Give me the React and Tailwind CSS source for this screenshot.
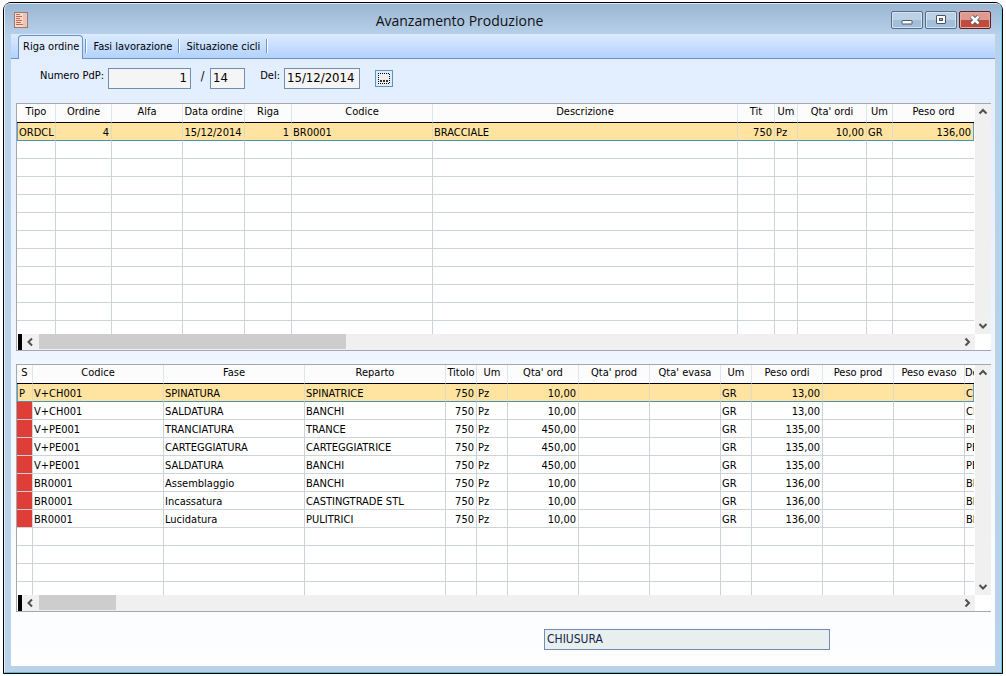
import React, { useState } from 'react';
import clsx from 'clsx';

const ORDER_COLUMNS = [
  { label: 'Tipo', width: 'w-[39px]' },
  { label: 'Ordine', width: 'w-[56px]', align: 'right' },
  { label: 'Alfa', width: 'w-[71px]' },
  { label: 'Data ordine', width: 'w-[62px]', align: 'center' },
  { label: 'Riga', width: 'w-[47px]', align: 'right' },
  { label: 'Codice', width: 'w-[141px]' },
  { label: 'Descrizione', width: 'w-auto' },
  { label: 'Tit', width: 'w-[37px]', align: 'right' },
  { label: 'Um', width: 'w-[23px]' },
  { label: "Qta' ordi", width: 'w-[69px]', align: 'right' },
  { label: 'Um', width: 'w-[26px]' },
  { label: 'Peso ord', width: 'w-[81px]', align: 'right' },
];

const ORDER_ROWS = [
  ['ORDCL', '4', '', '15/12/2014', '1', 'BR0001', 'BRACCIALE', '750', 'Pz', '10,00', 'GR', '136,00'],
];

const PHASE_COLUMNS = [
  { label: 'S', width: 'w-[16px]' },
  { label: 'Codice', width: 'w-[131px]' },
  { label: 'Fase', width: 'w-[141px]' },
  { label: 'Reparto', width: 'w-[141px]' },
  { label: 'Titolo', width: 'w-[31px]', align: 'right' },
  { label: 'Um', width: 'w-[31px]' },
  { label: "Qta' ord", width: 'w-[71px]', align: 'right' },
  { label: "Qta' prod", width: 'w-[71px]', align: 'right' },
  { label: "Qta' evasa", width: 'w-[71px]', align: 'right' },
  { label: 'Um', width: 'w-[31px]' },
  { label: 'Peso ordi', width: 'w-[71px]', align: 'right' },
  { label: 'Peso prod', width: 'w-[71px]', align: 'right' },
  { label: 'Peso evaso', width: 'w-[71px]', align: 'right' },
  { label: 'De', width: 'w-auto', headAlign: 'left' },
];

const PHASE_ROWS = [
  ['P', 'V+CH001', 'SPINATURA', 'SPINATRICE', '750', 'Pz', '10,00', '', '', 'GR', '13,00', '', '', 'CH'],
  ['', 'V+CH001', 'SALDATURA', 'BANCHI', '750', 'Pz', '10,00', '', '', 'GR', '13,00', '', '', 'CH'],
  ['', 'V+PE001', 'TRANCIATURA', 'TRANCE', '750', 'Pz', '450,00', '', '', 'GR', '135,00', '', '', 'PE'],
  ['', 'V+PE001', 'CARTEGGIATURA', 'CARTEGGIATRICE', '750', 'Pz', '450,00', '', '', 'GR', '135,00', '', '', 'PE'],
  ['', 'V+PE001', 'SALDATURA', 'BANCHI', '750', 'Pz', '450,00', '', '', 'GR', '135,00', '', '', 'PE'],
  ['', 'BR0001', 'Assemblaggio', 'BANCHI', '750', 'Pz', '10,00', '', '', 'GR', '136,00', '', '', 'BR'],
  ['', 'BR0001', 'Incassatura', 'CASTINGTRADE STL', '750', 'Pz', '10,00', '', '', 'GR', '136,00', '', '', 'BR'],
  ['', 'BR0001', 'Lucidatura', 'PULITRICI', '750', 'Pz', '10,00', '', '', 'GR', '136,00', '', '', 'BR'],
];

const VISIBLE_ROWS = 12;
const TABS = ['Riga ordine', 'Fasi lavorazione', 'Situazione cicli'];

const ALIGN = { left: 'text-left', center: 'text-center', right: 'text-right' };

const CHEVRONS = {
  up: 'M1.5 6.5 L5 3 L8.5 6.5',
  down: 'M1.5 3 L5 6.5 L8.5 3',
  left: 'M7 1.5 L3.5 5 L7 8.5',
  right: 'M3.5 1.5 L7 5 L3.5 8.5',
};

const ScrollButton = ({ dir, label }) => (
  <button type="button" aria-label={label} className="flex size-4 shrink-0 items-center justify-center">
    <svg width="10" height="10" viewBox="0 0 10 10" fill="none" stroke="#505050" strokeWidth="2">
      <path d={CHEVRONS[dir]} />
    </svg>
  </button>
);

const DataGrid = ({ name, columns, rows, statusColumn = false, thumb }) => {
  const [selected, setSelected] = useState(0);
  const padded = [...rows, ...Array(VISIBLE_ROWS - rows.length).fill(null)];

  return (
    <section aria-label={name} className="border-y border-l border-[#a3a8b0] bg-white">
      <div className="flex h-[230px]">
        <div className="min-w-0 flex-1 overflow-hidden pr-px">
          <table className="w-full table-fixed border-separate border-spacing-0 text-[11px] text-black">
            <thead className="leading-4">
              <tr className="bg-[#fcfcfd]">
                {columns.map((c, i) => (
                  <th
                    key={i}
                    className={clsx(
                      'h-[19px] overflow-hidden border-b border-b-black p-0 pb-0.5 font-normal whitespace-nowrap',
                      c.width,
                      ALIGN[c.headAlign || 'center'],
                      i < columns.length - 1 && 'border-r border-r-[#dfe6f0]'
                    )}
                  >
                    {c.label}
                  </th>
                ))}
              </tr>
            </thead>
            <tbody className="leading-[14px]">
              {padded.map((row, r) => {
                const active = row && r === selected;
                return (
                  <tr key={r} onClick={() => row && setSelected(r)} className={active ? 'bg-[#ffe3a0]' : 'bg-white'}>
                    {columns.map((c, i) => {
                      const last = i === columns.length - 1;
                      return (
                        <td
                          key={i}
                          className={clsx(
                            'h-[18px] overflow-hidden border-b p-0 pt-[3px] pr-0.5 pl-px whitespace-nowrap',
                            ALIGN[c.align || 'left'],
                            active ? 'border-b-[#4a90b0]' : 'border-b-[#ccd3da]',
                            !last && (active ? 'border-r border-r-[#e0d9c4]' : 'border-r border-r-[#ccd3da]'),
                            last && active && 'border-r border-r-[#5a9fd0]',
                            i === 0 && active && 'border-l border-l-[#5a9fd0] pl-0',
                            statusColumn && i === 0 && row && !active && 'bg-[#df3e37]'
                          )}
                        >
                          {row ? row[i] : ''}
                        </td>
                      );
                    })}
                  </tr>
                );
              })}
            </tbody>
          </table>
        </div>
        <div className="flex w-4 flex-col justify-between bg-[#f0f0f0]">
          <ScrollButton dir="up" label="Scorri su" />
          <ScrollButton dir="down" label="Scorri giù" />
        </div>
      </div>
      <div className="flex h-4 pr-4 pl-px">
        <div className="w-1 bg-black" />
        <div className="flex flex-1 bg-[#f0f0f0]">
          <ScrollButton dir="left" label="Scorri a sinistra" />
          <div className="flex-1 pl-px">
            <div className={clsx('h-[15px] bg-[#cdcdcd]', thumb)} />
          </div>
          <ScrollButton dir="right" label="Scorri a destra" />
        </div>
      </div>
    </section>
  );
};

const TitleBar = () => (
  <header className="flex h-[30px] items-center bg-linear-to-b from-[#9bb6d2] to-[#b7d0e9] pr-2.5 pl-[9px]">
    <svg width="14" height="16" viewBox="0 0 14 16" className="mt-0.5 shrink-0">
      <rect x="0.5" y="0.5" width="13" height="15" fill="#f3dccd" stroke="#9a7a70" />
      <rect x="9" y="1" width="4" height="14" fill="#ecc6b2" />
      <path d="M2 2.5h4M2 4.5h6M2 6.5h4M2 8.5h6M2 10.5h5M2 12.5h7" stroke="#c8654c" />
    </svg>
    <h1 className="flex-1 pt-1 text-center [font-family:Open_Sans,Noto_Sans,sans-serif] text-[14px] leading-5 font-normal text-[#111]">
      Avanzamento Produzione
    </h1>
    <div className="mt-0.5 flex gap-0.5">
      <button
        type="button"
        aria-label="Riduci a icona"
        className="flex h-[18px] w-8 items-center justify-center rounded-xs border border-[#566b85] bg-linear-to-b from-[#bdd1e6] from-50% to-[#a3bed9] to-50% shadow-[inset_0_0_0_1px_#d6e3f0]"
      >
        <svg width="12" height="10" viewBox="0 0 12 10">
          <rect x="1" y="5.5" width="10" height="3.5" rx="0.5" fill="#fff" stroke="#4c5663" />
        </svg>
      </button>
      <button
        type="button"
        aria-label="Ingrandisci"
        className="flex h-[18px] w-8 items-center justify-center rounded-xs border border-[#566b85] bg-linear-to-b from-[#bdd1e6] from-50% to-[#a3bed9] to-50% shadow-[inset_0_0_0_1px_#d6e3f0]"
      >
        <svg width="12" height="10" viewBox="0 0 12 10">
          <rect x="1.5" y="0.5" width="9" height="8" rx="0.5" fill="#fff" stroke="#4c5663" />
          <rect x="4.5" y="3.5" width="3" height="2" fill="#9cb7d3" stroke="#4c5663" />
        </svg>
      </button>
      <button
        type="button"
        aria-label="Chiudi"
        className="flex h-[18px] w-8 items-center justify-center rounded-xs border border-[#5c1f22] bg-linear-to-b from-[#dd9a91] from-50% to-[#c04a3c] to-50% shadow-[inset_0_0_0_1px_#e5aaa2]"
      >
        <svg width="12" height="10" viewBox="0 0 12 10" fill="none">
          <path d="M2.5 1.5 L9.5 8.5 M9.5 1.5 L2.5 8.5" stroke="#54555f" strokeWidth="4.4" />
          <path d="M2.5 1.5 L9.5 8.5 M9.5 1.5 L2.5 8.5" stroke="#fff" strokeWidth="2.6" />
        </svg>
      </button>
    </div>
  </header>
);

const App = () => {
  const [tab, setTab] = useState(0);
  const [numero, setNumero] = useState('1');
  const [anno, setAnno] = useState('14');
  const [data, setData] = useState('15/12/2014');
  const [stato, setStato] = useState('CHIUSURA');

  return (
    <div className="flex min-h-screen flex-col bg-white px-[3px] py-0.5 font-['DejaVu_Sans_Condensed','DejaVu_Sans',sans-serif] text-[11px] text-black">
      <div className="flex flex-1 flex-col rounded-t-lg border border-black bg-black">
        <div className="flex flex-1 flex-col overflow-hidden rounded-t-md border border-t-[#dce8f4] border-r-[#5fcbe8] border-b-[#5fb8d0] border-l-[#e6eff8] bg-[#b9d1e9]">
          <TitleBar />
          <main className="mr-1.5 mb-1.5 ml-1.5 flex flex-1 flex-col bg-linear-to-b from-[#e1edfe] to-[#fefeff]">
            <nav role="tablist" className="flex h-[25px] items-end border-b border-[#6a93c4] bg-linear-to-b from-[#dcebff] to-[#b2d2ff] pl-[7px]">
              {TABS.map((t, i) => (
                <div key={t} className="flex h-6 items-center">
                  <button
                    type="button"
                    role="tab"
                    aria-selected={tab === i}
                    onClick={() => setTab(i)}
                    className={clsx(
                      'h-6 border-t leading-4 whitespace-nowrap',
                      tab === i ? '-mb-px rounded-t-sm border-x border-[#6a93c4] bg-[#e2eeff] pr-[3px] pb-px pl-1' : 'border-transparent px-1.5'
                    )}
                  >
                    {t}
                  </button>
                  <span className={clsx('h-3.5 w-0.5 border-r border-l border-r-white border-l-[#6a93c4]', tab === i && 'ml-0.5')} />
                </div>
              ))}
            </nav>

            <div className="flex flex-1 flex-col pt-[9px] pr-1 pb-4 pl-[5px]">
              <form className="mb-3.5 flex h-[21px] items-start pl-6" onSubmit={e => e.preventDefault()}>
                <label htmlFor="numero" className="w-[68px] leading-4">Numero PdP:</label>
                <input
                  id="numero"
                  value={numero}
                  onChange={e => setNumero(e.target.value)}
                  className="h-[21px] w-[83px] border border-[#6f8db5] bg-[#f5f5f5] px-[3px] pb-0.5 text-right text-[13px]"
                />
                <label htmlFor="anno" className="w-[19px] pl-1 text-center text-[12px] leading-4">/</label>
                <input
                  id="anno"
                  value={anno}
                  onChange={e => setAnno(e.target.value)}
                  className="h-[21px] w-[35px] border border-[#6f8db5] bg-[#f5f5f5] px-0.5 pb-0.5 text-[13px]"
                />
                <label htmlFor="data" className="w-[39px] pr-1 text-right leading-4">Del:</label>
                <input
                  id="data"
                  value={data}
                  onChange={e => setData(e.target.value)}
                  className="h-[21px] w-[76px] border border-[#6f8db5] bg-[#f5f5f5] px-0.5 pb-0.5 text-[13px]"
                />
                <button
                  type="button"
                  aria-label="Cerca"
                  className="mt-0.5 ml-[15px] flex h-[17px] w-[18px] items-center justify-center border border-[#5a96bd] bg-[#dfebf6]"
                >
                  <svg width="12" height="11" viewBox="0 0 12 11" fill="none" stroke="#000">
                    <rect width="12" height="11" fill="#efefef" stroke="none" />
                    <path d="M0 0.5h12M0 10.5h12M0.5 0v11M11.5 1v10" strokeDasharray="1 1" />
                    <path d="M2 8h2M5 8h2M8 8h2" stroke="#333" strokeWidth="2" />
                  </svg>
                </button>
              </form>

              <div className="flex flex-col gap-[13px]">
                <DataGrid name="Righe ordine" columns={ORDER_COLUMNS} rows={ORDER_ROWS} thumb="w-1/3" />
                <DataGrid name="Fasi" columns={PHASE_COLUMNS} rows={PHASE_ROWS} statusColumn thumb="w-1/12" />
              </div>

              <div className="mt-[17px] flex pr-[161px]">
                <input
                  aria-label="Stato"
                  value={stato}
                  onChange={e => setStato(e.target.value)}
                  className="ml-auto h-[21px] w-[286px] border border-[#6f8db5] bg-[#e8efee] px-0.5 pb-0.5 text-[12px] text-[#15254a]"
                />
              </div>
            </div>
          </main>
        </div>
      </div>
    </div>
  );
};

export default App;
